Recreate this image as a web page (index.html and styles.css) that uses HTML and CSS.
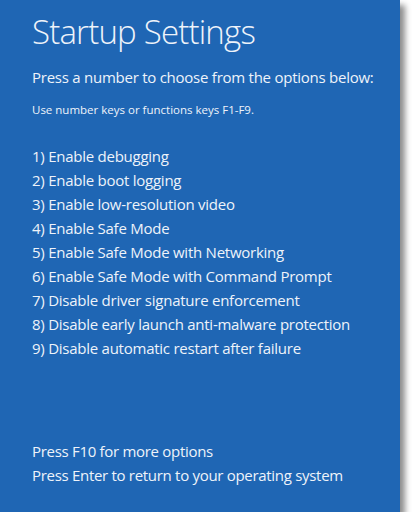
FILE: index.html
```html
<!DOCTYPE html>
<html lang="en">
<head>
<meta charset="utf-8">
<title>Startup Settings</title>
<link rel="stylesheet" href="styles.css">
</head>
<body>
<main class="screen">
  <h1 class="title">Startup Settings</h1>
  <p class="lead">Press a number to choose from the options below:</p>
  <p class="hint">Use number keys or functions keys F1-F9.</p>
  <ol class="options">
    <li>1) Enable debugging</li>
    <li>2) Enable boot logging</li>
    <li>3) Enable low-resolution video</li>
    <li>4) Enable Safe Mode</li>
    <li>5) Enable Safe Mode with Networking</li>
    <li>6) Enable Safe Mode with Command Prompt</li>
    <li>7) Disable driver signature enforcement</li>
    <li>8) Disable early launch anti-malware protection</li>
    <li>9) Disable automatic restart after failure</li>
  </ol>
  <div class="footer">
    <p class="line">Press F10 for more options</p>
    <p class="line">Press Enter to return to your operating system</p>
  </div>
</main>
</body>
</html>
```

FILE: styles.css
```css
html, body {
  margin: 0;
  padding: 0;
  background: #ffffff;
}

.screen {
  box-sizing: border-box;
  width: 400px;
  height: 512px;
  background: #1f66b4;
  color: #eef3fa;
  font-family: "Open Sans", "Noto Sans", sans-serif;
  padding: 10px 0 25px 32px;
  display: flex;
  flex-direction: column;
  box-shadow: 5px 5px 6px rgba(0, 0, 0, 0.45);
}

.title {
  margin: 0;
  font-size: 33px;
  font-weight: 300;
  line-height: 44px;
  letter-spacing: -0.8px;
}

.lead {
  margin: 11px 0 0;
  font-size: 15px;
  line-height: 24px;
  letter-spacing: -0.25px;
}

.hint {
  margin: 12px 0 0;
  font-size: 11.5px;
  line-height: 18px;
}

.options {
  list-style: none;
  margin: 25px 0 0;
  padding: 0;
  font-size: 15px;
  line-height: 24px;
  letter-spacing: -0.25px;
}

.footer {
  margin-top: auto;
  font-size: 15px;
  line-height: 24px;
  letter-spacing: -0.3px;
}

.line {
  margin: 0;
}
```
